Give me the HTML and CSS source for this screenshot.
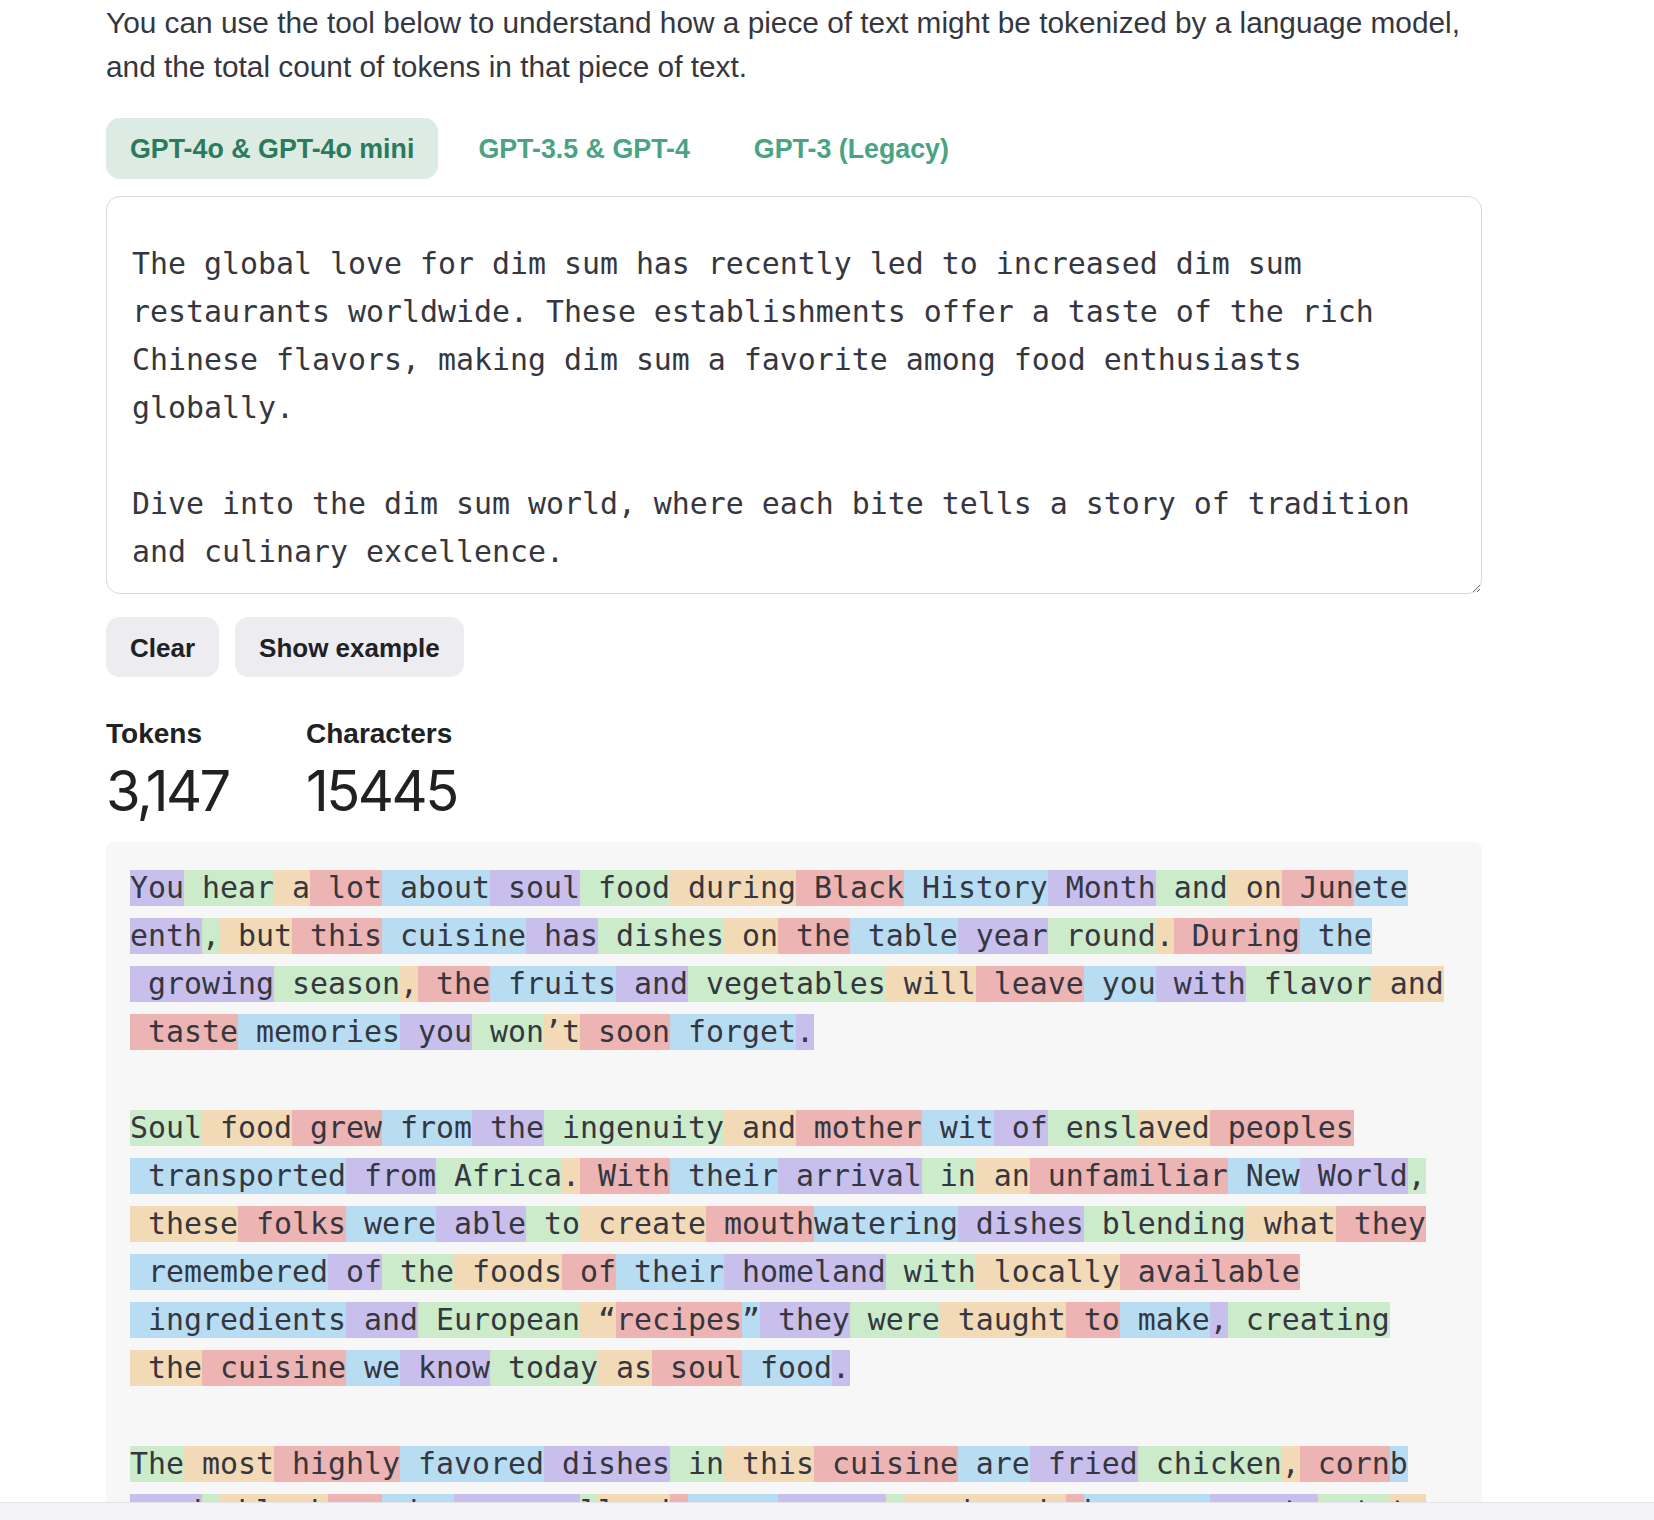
FILE: index.html
```html
<!DOCTYPE html>
<html lang="en">
<head>
<meta charset="utf-8">
<title>Tokenizer</title>
<link rel="stylesheet" href="styles.css">
</head>
<body>
<main class="page">
  <p class="intro">You can use the tool below to understand how a piece of text might be tokenized by a language model, and the total count of tokens in that piece of text.</p>

  <div class="tabs">
    <div class="tab active">GPT-4o &amp; GPT-4o mini</div>
    <div class="tab">GPT-3.5 &amp; GPT-4</div>
    <div class="tab">GPT-3 (Legacy)</div>
  </div>

  <textarea class="input" spellcheck="false">The global love for dim sum has recently led to increased dim sum restaurants worldwide. These establishments offer a taste of the rich Chinese flavors, making dim sum a favorite among food enthusiasts globally.

Dive into the dim sum world, where each bite tells a story of tradition and culinary excellence.</textarea>

  <div class="actions">
    <button class="btn">Clear</button>
    <button class="btn">Show example</button>
  </div>

  <div class="stats">
    <div class="stat">
      <div class="stat-label">Tokens</div>
      <div class="stat-value">3,147</div>
    </div>
    <div class="stat">
      <div class="stat-label">Characters</div>
      <div class="stat-value">15445</div>
    </div>
  </div>

  <div class="tokens">
    <p class="tok-para"><span class="t p">You</span><span class="t g"> hear</span><span class="t o"> a</span><span class="t r"> lot</span><span class="t b"> about</span><span class="t p"> soul</span><span class="t g"> food</span><span class="t o"> during</span><span class="t r"> Black</span><span class="t b"> History</span><span class="t p"> Month</span><span class="t g"> and</span><span class="t o"> on</span><span class="t r"> Jun</span><span class="t b">ete</span><span class="t p">enth</span><span class="t g">,</span><span class="t o"> but</span><span class="t r"> this</span><span class="t b"> cuisine</span><span class="t p"> has</span><span class="t g"> dishes</span><span class="t o"> on</span><span class="t r"> the</span><span class="t b"> table</span><span class="t p"> year</span><span class="t g"> round</span><span class="t o">.</span><span class="t r"> During</span><span class="t b"> the</span><span class="t p"> growing</span><span class="t g"> season</span><span class="t o">,</span><span class="t r"> the</span><span class="t b"> fruits</span><span class="t p"> and</span><span class="t g"> vegetables</span><span class="t o"> will</span><span class="t r"> leave</span><span class="t b"> you</span><span class="t p"> with</span><span class="t g"> flavor</span><span class="t o"> and</span><span class="t r"> taste</span><span class="t b"> memories</span><span class="t p"> you</span><span class="t g"> won</span><span class="t o">’t</span><span class="t r"> soon</span><span class="t b"> forget</span><span class="t p">.</span></p>
    <p class="tok-para"><span class="t g">Soul</span><span class="t o"> food</span><span class="t r"> grew</span><span class="t b"> from</span><span class="t p"> the</span><span class="t g"> ingenuity</span><span class="t o"> and</span><span class="t r"> mother</span><span class="t b"> wit</span><span class="t p"> of</span><span class="t g"> ensl</span><span class="t o">aved</span><span class="t r"> peoples</span><span class="t b"> transported</span><span class="t p"> from</span><span class="t g"> Africa</span><span class="t o">.</span><span class="t r"> With</span><span class="t b"> their</span><span class="t p"> arrival</span><span class="t g"> in</span><span class="t o"> an</span><span class="t r"> unfamiliar</span><span class="t b"> New</span><span class="t p"> World</span><span class="t g">,</span><span class="t o"> these</span><span class="t r"> folks</span><span class="t b"> were</span><span class="t p"> able</span><span class="t g"> to</span><span class="t o"> create</span><span class="t r"> mouth</span><span class="t b">watering</span><span class="t p"> dishes</span><span class="t g"> blending</span><span class="t o"> what</span><span class="t r"> they</span><span class="t b"> remembered</span><span class="t p"> of</span><span class="t g"> the</span><span class="t o"> foods</span><span class="t r"> of</span><span class="t b"> their</span><span class="t p"> homeland</span><span class="t g"> with</span><span class="t o"> locally</span><span class="t r"> available</span><span class="t b"> ingredients</span><span class="t p"> and</span><span class="t g"> European</span><span class="t o"> “</span><span class="t r">recipes</span><span class="t b">”</span><span class="t p"> they</span><span class="t g"> were</span><span class="t o"> taught</span><span class="t r"> to</span><span class="t b"> make</span><span class="t p">,</span><span class="t g"> creating</span><span class="t o"> the</span><span class="t r"> cuisine</span><span class="t b"> we</span><span class="t p"> know</span><span class="t g"> today</span><span class="t o"> as</span><span class="t r"> soul</span><span class="t b"> food</span><span class="t p">.</span></p>
    <p class="tok-para"><span class="t g">The</span><span class="t o"> most</span><span class="t r"> highly</span><span class="t b"> favored</span><span class="t p"> dishes</span><span class="t g"> in</span><span class="t o"> this</span><span class="t r"> cuisine</span><span class="t b"> are</span><span class="t p"> fried</span><span class="t g"> chicken</span><span class="t o">,</span><span class="t r"> corn</span><span class="t b">b</span><span class="t p">read</span><span class="t g">,</span><span class="t o"> black</span><span class="t r">-ey</span><span class="t b">ed p</span><span class="t p">eas, co</span><span class="t g">l</span><span class="t o">lard</span><span class="t r"> </span><span class="t b">green</span><span class="t p">s, mac</span><span class="t g">a</span><span class="t o">roni and </span><span class="t r">c</span><span class="t b">heese, </span><span class="t p">sweet </span><span class="t g">pota</span><span class="t o">to</span><span class="t r"> pie</span><span class="t b">,</span><span class="t p"> and</span><span class="t g"> peach</span><span class="t o"> cobbler</span><span class="t r">.</span></p>
  </div>
</main>
<div class="hscroll"></div>
</body>
</html>
```

FILE: styles.css
```css
* {
  box-sizing: border-box;
}

html,
body {
  margin: 0;
  height: 100%;
  overflow: hidden;
  background: #ffffff;
}

body {
  font-family: "Liberation Sans", Arial, sans-serif;
  color: #353740;
}

.page {
  margin-left: 106px;
  width: 1376px;
  padding-top: 1px;
}

.intro {
  margin: 0;
  font-size: 29.8px;
  line-height: 44.3px;
  color: #353740;
}

.tabs {
  display: flex;
  gap: 16px;
  margin-top: 28px;
}

.tab {
  height: 61px;
  padding: 3px 24px 0;
  border-radius: 14px;
  display: flex;
  align-items: center;
  font-size: 26.8px;
  font-weight: 700;
  color: #4aa382;
}

.tab.active {
  background: #dcece5;
  color: #2c7a5c;
}

.input {
  display: block;
  margin: 17px 0 0;
  width: 100%;
  height: 398px;
  padding: 43px 24px 17px 25px;
  border: 1px solid #d9d9e3;
  border-radius: 14px;
  font-family: "DejaVu Sans Mono", monospace;
  font-size: 29.9px;
  line-height: 48px;
  color: #353740;
  background: #ffffff;
  resize: vertical;
  overflow: hidden;
  outline: none;
}

.actions {
  display: flex;
  gap: 16px;
  margin-top: 23px;
}

.btn {
  height: 60px;
  padding: 3px 24px 0;
  border: 0;
  border-radius: 14px;
  background: #ececf1;
  font-family: "Liberation Sans", Arial, sans-serif;
  font-size: 26px;
  font-weight: 700;
  color: #202123;
}

.stats {
  display: grid;
  grid-template-columns: 200px auto;
  margin-top: 37px;
}

.stat-label {
  font-size: 28px;
  font-weight: 700;
  line-height: 40px;
  color: #202123;
}

.stat-value {
  padding-top: 3px;
  font-family: Inter, "Liberation Sans", sans-serif;
  font-size: 56px;
  line-height: 68px;
  letter-spacing: -2.5px;
  color: #202123;
}

.tokens {
  margin-top: 17px;
  padding: 22px 24px 20px;
  background: #f7f7f7;
  border-radius: 8px;
  font-family: "DejaVu Sans Mono", monospace;
  font-size: 29.9px;
  line-height: 48px;
  color: #353740;
}

.tok-para {
  margin: 0 0 48px;
}

.t {
  display: inline-block;
  white-space: pre;
  line-height: 36px;
}

.t.p { background: #c9bfec; }
.t.g { background: #cbebcb; }
.t.o { background: #f3dab6; }
.t.r { background: #ecb4b3; }
.t.b { background: #b8ddf2; }

.hscroll {
  position: fixed;
  left: 0;
  right: 0;
  bottom: 0;
  height: 18px;
  background: #f3f3f5;
  border-top: 1px solid #e4e4e9;
}
```
